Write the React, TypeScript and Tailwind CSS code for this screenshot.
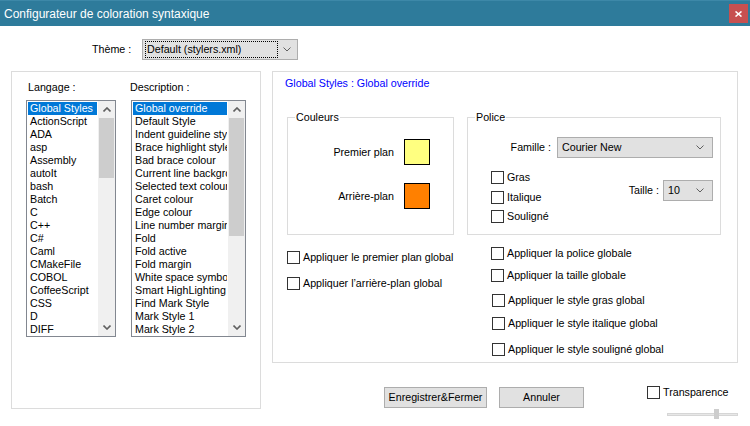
import React from 'react';

const langs = [
  'Global Styles', 'ActionScript', 'ADA', 'asp', 'Assembly', 'autoIt', 'bash', 'Batch', 'C', 'C++', 'C#',
  'Caml', 'CMakeFile', 'COBOL', 'CoffeeScript', 'CSS', 'D', 'DIFF',
];

const styles = [
  'Global override', 'Default Style', 'Indent guideline style', 'Brace highlight style', 'Bad brace colour',
  'Current line background colour', 'Selected text colour', 'Caret colour', 'Edge colour', 'Line number margin',
  'Fold', 'Fold active', 'Fold margin', 'White space symbol', 'Smart HighLighting', 'Find Mark Style',
  'Mark Style 1', 'Mark Style 2',
];

function Chevron({ up = false, bold = false }: { up?: boolean; bold?: boolean }) {
  return (
    <svg width="8" height="5" viewBox="0 0 8 5">
      <polyline
        points={up ? '0.5,4.5 4,1 7.5,4.5' : '0.5,0.5 4,4 7.5,0.5'}
        fill="none"
        stroke="#606060"
        strokeWidth={bold ? 1.6 : 1}
      />
    </svg>
  );
}

function Box() {
  return <span className="h-[13px] w-[13px] shrink-0 border border-[#333333] bg-white" />;
}

function Check({ label, className = '' }: { label: string; className?: string }) {
  return (
    <div className={`flex h-[13px] items-center gap-[3px] ${className}`}>
      <Box />
      <span className="whitespace-nowrap leading-[13px]">{label}</span>
    </div>
  );
}

function Combo({ value, className = '' }: { value: string; className?: string }) {
  return (
    <div className={`flex h-[21px] items-center border border-[#adadad] bg-[#e1e1e1] pl-[4px] pr-[8px] ${className}`}>
      <span className="flex-1 truncate">{value}</span>
      <Chevron />
    </div>
  );
}

function ListBox({ items, width, thumb }: { items: string[]; width: string; thumb: string }) {
  return (
    <div className={`flex h-[237px] border border-[#828790] bg-white ${width}`}>
      <div className="min-w-0 flex-1 overflow-hidden p-[1px]">
        {items.map((it, i) => (
          <div
            key={it}
            className={`h-[13px] overflow-hidden whitespace-nowrap pl-[2px] leading-[13px] ${
              i === 0 ? 'bg-[#0078d7] text-white' : 'text-black'
            }`}
          >
            {it}
          </div>
        ))}
      </div>
      <div className="flex w-[17px] flex-col bg-[#f0f0f0]">
        <div className="flex h-[17px] items-center justify-center">
          <Chevron up bold />
        </div>
        <div className={`mx-[1px] bg-[#cdcdcd] ${thumb}`} />
        <div className="flex-1" />
        <div className="flex h-[17px] items-center justify-center">
          <Chevron bold />
        </div>
      </div>
    </div>
  );
}

export default function App() {
  return (
    <div className="flex h-[426px] w-[750px] flex-col overflow-hidden bg-white font-['Liberation_Sans',Arial,sans-serif] text-[10.7px] text-black">
      {/* title bar */}
      <div className="flex h-[26px] shrink-0 items-center justify-between border-t border-[#3d88a8] bg-[#2e7b9b] pl-[4px] pr-[2px]">
        <span className="text-[12px] text-white">Configurateur de coloration syntaxique</span>
        <div className="flex h-[19px] w-[19px] items-center justify-center bg-[#c75050]">
          <svg width="7" height="6" viewBox="0 0 7 6">
            <path d="M0.5 0.5 L6.5 5.5 M6.5 0.5 L0.5 5.5" stroke="white" strokeWidth="1.6" />
          </svg>
        </div>
      </div>

      {/* theme row */}
      <div className="mt-[13px] flex h-[21px] items-center pl-[92px]">
        <span className="w-[50px]">Thème :</span>
        <div className="flex h-[21px] w-[156px] items-center border border-[#adadad] bg-[#e1e1e1] pl-[2px] pr-[6px]">
          <div className="flex h-[17px] w-[133px] items-center border border-dotted border-black pl-[1px]">
            Default (stylers.xml)
          </div>
          <span className="flex-1" />
          <Chevron />
        </div>
      </div>

      {/* main */}
      <div className="mt-[11px] flex gap-[11px] pl-[11px]">
        <div className="flex h-[338px] w-[250px] gap-[15px] border border-[#dcdcdc] pl-[14px] pt-[8px]">
          <div className="flex flex-col">
            <span className="mb-[6px] h-[14px] pl-[2px] leading-[14px]">Langage :</span>
            <ListBox items={langs} width="w-[90px]" thumb="h-[60px]" />
          </div>
          <div className="flex flex-col">
            <span className="mb-[6px] h-[14px] -ml-[1px] leading-[14px]">Description :</span>
            <ListBox items={styles} width="w-[115px]" thumb="h-[118px]" />
          </div>
        </div>

        <div className="flex flex-col">
          <div className="flex h-[292px] w-[466px] flex-col border border-[#dcdcdc]">
            <span className="mt-[4px] h-[14px] pl-[12px] leading-[14px] text-[#0000ff]">
              Global Styles : Global override
            </span>
            <div className="mt-[20px] flex gap-[13px] pl-[14px]">
              <fieldset className="h-[125px] w-[167px] border border-[#dcdcdc]">
                <legend className="ml-[7px] px-[1px] leading-[14px]">Couleurs</legend>
                <div className="mt-[15px] flex items-center justify-end gap-[10px] pr-[23px]">
                  <span>Premier plan</span>
                  <span className="h-[26px] w-[26px] border border-black bg-[#ffff80]" />
                </div>
                <div className="mt-[18px] flex items-center justify-end gap-[10px] pr-[23px]">
                  <span>Arrière-plan</span>
                  <span className="h-[26px] w-[26px] border border-black bg-[#ff8000]" />
                </div>
              </fieldset>
              <fieldset className="h-[125px] w-[254px] border border-[#dcdcdc]">
                <legend className="ml-[7px] px-[1px] leading-[14px]">Police</legend>
                <div className="mt-[13px] flex items-center justify-end gap-[6px] pr-[7px]">
                  <span>Famille :</span>
                  <Combo value="Courier New" className="w-[156px]" />
                </div>
                <div className="mt-[13px] flex pl-[23px] pr-[7px]">
                  <div className="flex flex-col">
                    <Check label="Gras" />
                    <Check label="Italique" className="mt-[7px]" />
                    <Check label="Souligné" className="mt-[6px]" />
                  </div>
                  <div className="ml-auto mt-[9px] flex h-[21px] items-center gap-[4px]">
                    <span>Taille :</span>
                    <Combo value="10" className="w-[50px]" />
                  </div>
                </div>
              </fieldset>
            </div>
            <div className="flex">
              <div className="flex w-[194px] flex-col pl-[14px] pt-[16px]">
                <Check label="Appliquer le premier plan global" />
                <Check label="Appliquer l’arrière-plan global" className="mt-[13px]" />
              </div>
              <div className="flex flex-col pl-[24px] pt-[12px]">
                <Check label="Appliquer la police globale" />
                <Check label="Appliquer la taille globale" className="mt-[9px]" />
                <Check label="Appliquer le style gras global" className="ml-[1px] mt-[12px]" />
                <Check label="Appliquer le style italique global" className="ml-[1px] mt-[10px]" />
                <Check label="Appliquer le style souligné global" className="ml-[1px] mt-[13px]" />
              </div>
            </div>
          </div>

          {/* buttons */}
          <div className="mt-[24px] flex items-start">
            <button className="ml-[112px] h-[21px] w-[103px] border border-[#adadad] bg-[#e1e1e1] text-center">
              Enregistrer&amp;Fermer
            </button>
            <button className="ml-[12px] h-[21px] w-[85px] border border-[#adadad] bg-[#e1e1e1] text-center">
              Annuler
            </button>
            <div className="ml-[63px] -mt-[1px] flex flex-col">
              <Check label="Transparence" />
              <div className="ml-[20px] mt-[10px] flex h-[10px] w-[71px] items-center">
                <div className="h-[3px] w-[47px] border-y border-l border-[#d6d6d6] bg-[#e7e7e7]" />
                <div className="h-[10px] w-[5px] bg-[#cdcdcd]" />
                <div className="h-[3px] flex-1 border-y border-r border-[#d6d6d6] bg-[#e7e7e7]" />
              </div>
            </div>
          </div>
        </div>
      </div>
    </div>
  );
}
